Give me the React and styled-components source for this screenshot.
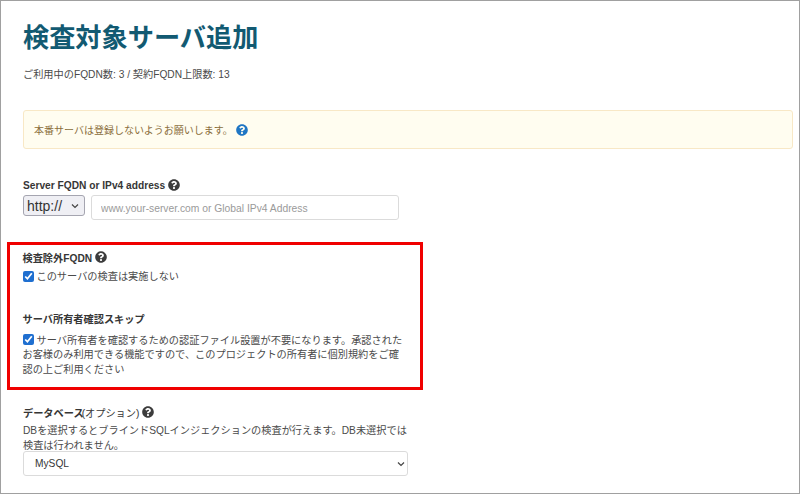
import React from 'react';
import styled, { createGlobalStyle } from 'styled-components';
import { FaQuestionCircle } from 'react-icons/fa';

const chevron = encodeURIComponent(
  '<svg xmlns="http://www.w3.org/2000/svg" width="8" height="6" viewBox="0 0 8 6"><path d="M1 1.5 L4 4.5 L7 1.5" fill="none" stroke="#444" stroke-width="1.2"/></svg>'
);

const GlobalStyle = createGlobalStyle`
  html, body {
    margin: 0;
    padding: 0;
    background: #fff;
  }
  body {
    font-family: "Liberation Sans", "Noto Sans CJK JP", sans-serif;
    font-size: 10.2px;
    color: #4a4a4a;
  }
`;

const Page = styled.div`
  box-sizing: border-box;
  width: 800px;
  height: 494px;
  overflow: hidden;
  border: 1px solid #a0a0a0;
  padding: 0 6px 0 22px;
`;

const Title = styled.h1`
  margin: 23px 0 0;
  font-size: 26.2px;
  line-height: 28px;
  font-weight: 700;
  color: #125a72;
`;

const Usage = styled.p`
  margin: 16px 0 0;
  line-height: 14px;
  color: #4a4a4a;
`;

const Notice = styled.div`
  box-sizing: border-box;
  display: flex;
  align-items: center;
  gap: 3px;
  height: 39px;
  margin-top: 28px;
  padding: 0 10px;
  border: 1.5px solid #f8e8c6;
  border-radius: 3px;
  background: #fffdf0;
  font-size: 10px;
  color: #8a6d3b;
`;

const Help = styled(FaQuestionCircle)`
  flex: none;
  width: 12px;
  height: 12px;
  color: ${({ $blue }) => ($blue ? '#1f76c4' : '#3c3c3c')};
`;

const Field = styled.div`
  margin-top: ${({ $top }) => $top || 0}px;
`;

const Label = styled.div`
  display: flex;
  align-items: center;
  gap: 3px;
  height: 14px;
  font-weight: 700;
  color: #363636;
`;

const LabelNote = styled.span`
  font-weight: 400;
  margin-left: -5px;
`;

const ServerRow = styled.div`
  display: flex;
  align-items: flex-start;
  gap: 6px;
  margin-top: 3px;
`;

const SchemeSelect = styled.select`
  appearance: none;
  box-sizing: border-box;
  width: 62px;
  height: 21px;
  padding: 0 0 0 3px;
  font-family: "Liberation Sans", sans-serif;
  font-size: 14px;
  color: #333;
  background: #efeff4 url("data:image/svg+xml,${chevron}") no-repeat right 5px center;
  border: 1px solid #a5a5b0;
  border-radius: 3px;
`;

const AddressInput = styled.input`
  box-sizing: border-box;
  width: 308px;
  height: 25px;
  padding: 2px 9px 0;
  font-family: "Liberation Sans", sans-serif;
  font-size: 10.3px;
  color: #333;
  background: #fff;
  border: 1px solid #dbdbdb;
  border-radius: 3px;
  &::placeholder {
    color: #9a9a9a;
    opacity: 1;
  }
`;

const Highlight = styled.section`
  box-sizing: border-box;
  width: 416px;
  height: 148px;
  margin: 22px 0 0 -16px;
  padding: 5px 12.5px 0;
  border: 3.5px solid #f00000;
`;

const CheckLine = styled.label`
  display: block;
  line-height: 14.5px;
  margin-top: ${({ $top }) => $top}px;
  color: #4a4a4a;
`;

const Check = styled.input`
  width: 11px;
  height: 11px;
  margin: 0 3px 0 0;
  vertical-align: -1.5px;
  accent-color: #1f6fd0;
`;

const Hint = styled.p`
  width: 392px;
  margin: 4px 0 0;
  line-height: 15px;
  color: #4a4a4a;
`;

const DbSelect = styled.select`
  appearance: none;
  display: block;
  box-sizing: border-box;
  width: 385px;
  height: 25px;
  margin-top: -2px;
  padding: 0 11px;
  font-family: "Liberation Sans", sans-serif;
  font-size: 10.2px;
  color: #363636;
  background: #fff url("data:image/svg+xml,${chevron}") no-repeat right 2px center;
  border: 1px solid #dbdbdb;
  border-radius: 3px;
`;

export default function App() {
  return (
    <Page>
      <GlobalStyle />
      <Title>検査対象サーバ追加</Title>
      <Usage>ご利用中のFQDN数: 3 / 契約FQDN上限数: 13</Usage>
      <Notice>
        本番サーバは登録しないようお願いします。
        <Help $blue />
      </Notice>
      <Field $top={29}>
        <Label>
          Server FQDN or IPv4 address <Help />
        </Label>
        <ServerRow>
          <SchemeSelect defaultValue="http://">
            <option>http://</option>
            <option>https://</option>
          </SchemeSelect>
          <AddressInput placeholder="www.your-server.com or Global IPv4 Address" />
        </ServerRow>
      </Field>
      <Highlight>
        <Label>
          検査除外FQDN <Help />
        </Label>
        <CheckLine $top={6}>
          <Check type="checkbox" defaultChecked />
          このサーバの検査は実施しない
        </CheckLine>
        <Field $top={27}>
          <Label>サーバ所有者確認スキップ</Label>
          <CheckLine $top={8}>
            <Check type="checkbox" defaultChecked />
            サーバ所有者を確認するための認証ファイル設置が不要になります。承認されたお客様のみ利用できる機能ですので、このプロジェクトの所有者に個別規約をご確認の上ご利用ください
          </CheckLine>
        </Field>
      </Highlight>
      <Field $top={15}>
        <Label>
          データベース<LabelNote>(オプション)</LabelNote> <Help />
        </Label>
        <Hint>DBを選択するとブラインドSQLインジェクションの検査が行えます。DB未選択では検査は行われません。</Hint>
        <DbSelect defaultValue="MySQL">
          <option>MySQL</option>
          <option>PostgreSQL</option>
        </DbSelect>
      </Field>
    </Page>
  );
}
